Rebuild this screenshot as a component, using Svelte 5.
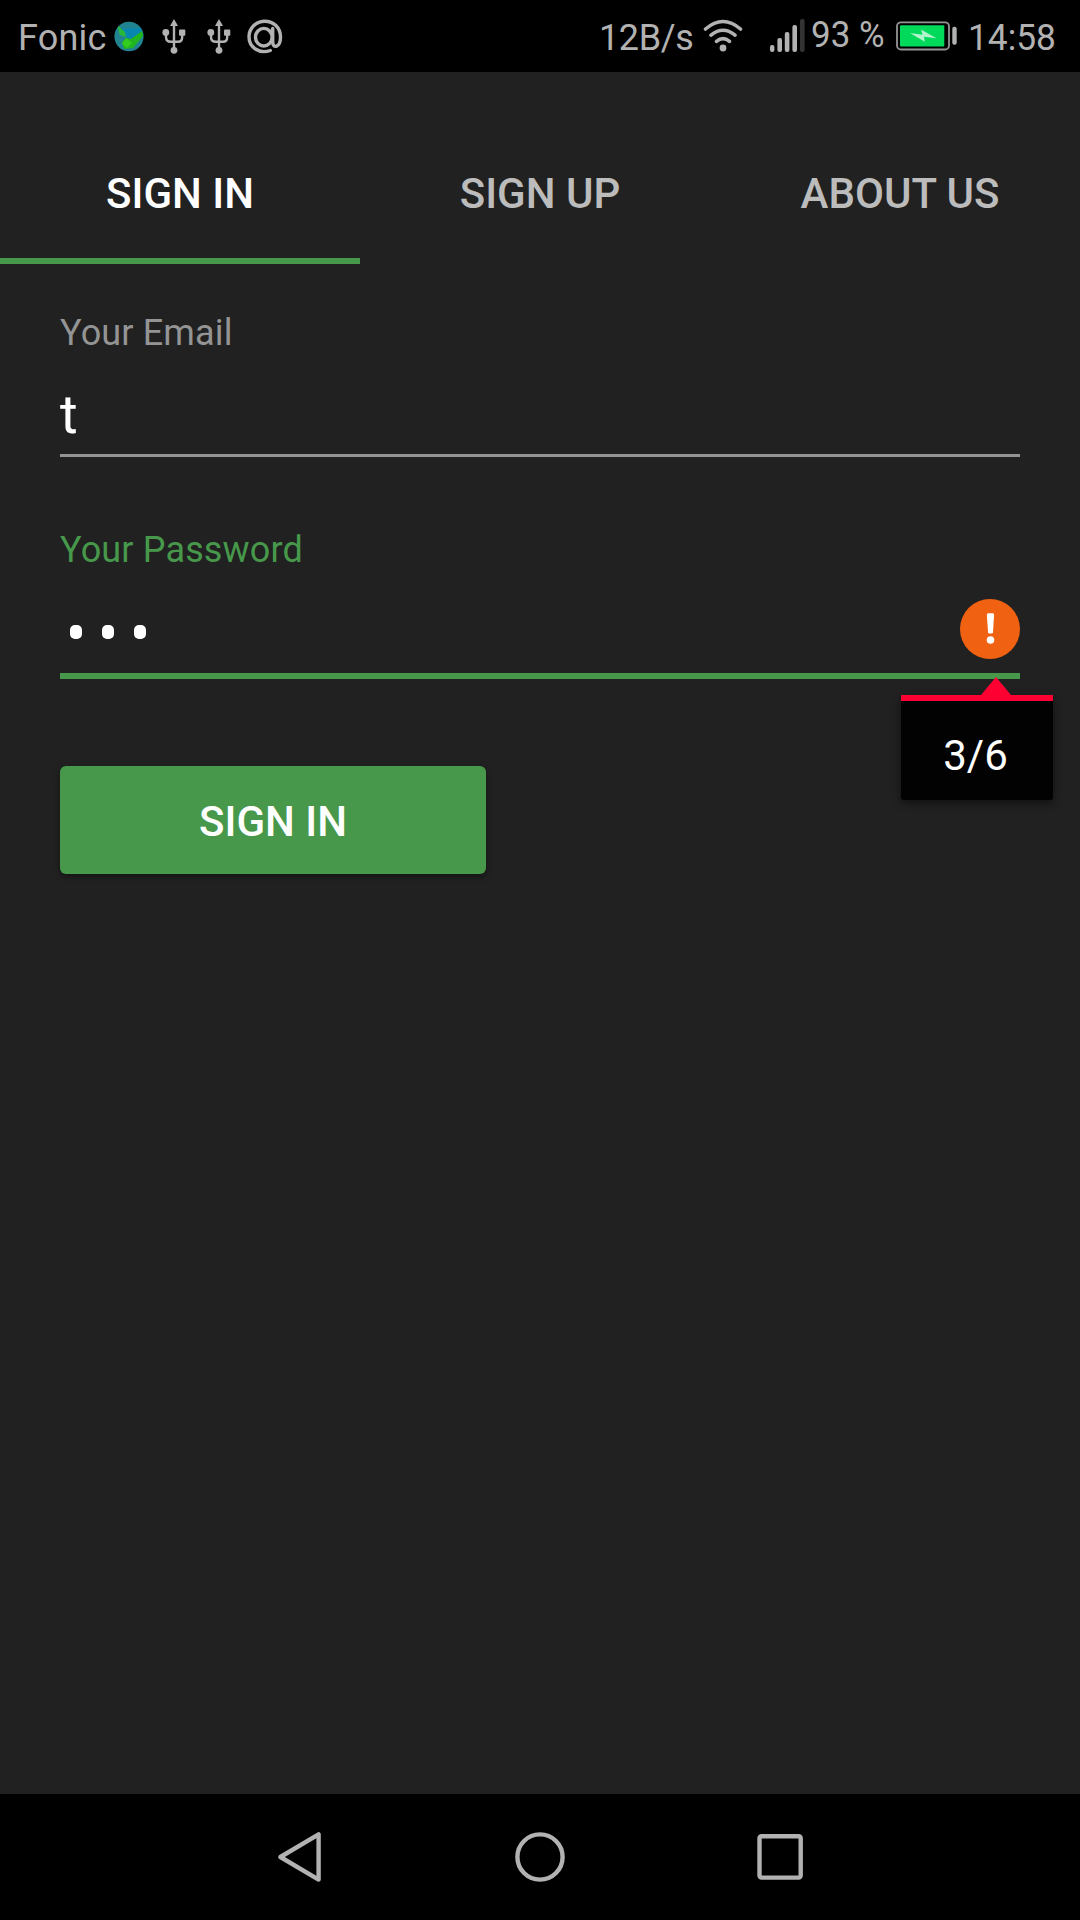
<script>
  const tabs = ['SIGN IN', 'SIGN UP', 'ABOUT US'];
  let active = $state(0);
  const dots = [0, 1, 2];
</script>

{#snippet usb()}
  <svg class="usb" width="24" height="36" viewBox="0 0 24 36">
    <path d="M12 0 16 7H8Z" />
    <circle cx="12" cy="31.3" r="3.4" />
    <circle cx="3.8" cy="13.5" r="3.4" />
    <rect x="17" y="10.5" width="6.3" height="6.3" rx="1" />
    <path class="line" d="M12 5V31M4 14V18Q4 22.8 9 22.8H16Q20.2 22.8 20.2 18V15" />
  </svg>
{/snippet}

<div class="screen">
  <header class="status">
    <span class="carrier">Fonic</span>
    <svg class="globe" width="30" height="31" viewBox="0 0 30 31">
      <defs><clipPath id="globe"><ellipse cx="15" cy="15.5" rx="14.6" ry="14.8" /></clipPath></defs>
      <g clip-path="url(#globe)">
        <rect width="30" height="31" fill="#21838f" />
        <path d="M4 8 28 7 28 12 15 18Z" fill="#0787b0" />
        <path d="M3 4 11 11 12 16 6 14Z" fill="#27b83a" />
        <path d="M28 10 29 15 19 27 10 28 8 21 12 17 17 18Z" fill="#21b51f" />
        <path d="M12 17 18 22 13 27 8 23Z" fill="#35cc20" />
      </g>
    </svg>
    {@render usb()}
    {@render usb()}
    <svg class="at" width="36" height="36" viewBox="0 0 36 36">
      <ellipse cx="16.8" cy="18.2" rx="8.3" ry="8.8" />
      <path d="M25.7 9.5V23C25.7 30.2 33.5 28.5 33.5 18C33.5 8.5 26.5 2.2 17.8 2.2C9 2.2 2 9.2 2 17.8C2 28.3 12 35.3 23.3 31.5" />
    </svg>
    <span class="speed">12B/s</span>
    <svg class="wifi" width="40" height="34" viewBox="0 0 40 34">
      <path d="M2.5 10Q20-5 37.5 10M8 16.2Q20 6.3 32 16.2M13.5 22.3Q20 17 26.5 22.3" />
      <circle cx="20" cy="29" r="3.4" />
    </svg>
    <svg class="signal" width="35" height="34" viewBox="0 0 35 34">
      <rect x="0" y="26" width="4.4" height="7" rx="2" />
      <rect x="7.4" y="19" width="4.6" height="14" rx="2" />
      <rect x="14.8" y="13" width="4.6" height="20" rx="2" />
      <rect x="22.4" y="6" width="4.6" height="27" rx="2" />
      <rect class="off" x="30" y="0" width="4.6" height="33" rx="2" />
    </svg>
    <span class="percent">93 %</span>
    <svg class="battery" width="61" height="30" viewBox="0 0 61 30">
      <rect x="1" y="1.3" width="52" height="27.2" rx="4" fill="none" stroke="#949494" stroke-width="1.8" />
      <rect x="4" y="4.3" width="44.3" height="21.2" rx="1" fill="#00d95a" />
      <path d="M14 12 26.5 13.7 25 8.5 40.5 17.3 28 15.8 28.8 20.8Z" fill="#b0f3cd" />
      <rect x="56.3" y="5.7" width="4.4" height="18" rx="2" fill="#b2b2b2" />
    </svg>
    <span class="clock">14:58</span>
  </header>

  <nav class="tabs">
    {#each tabs as tab, i}
      <button class="tab" class:active={active === i} onclick={() => (active = i)}>{tab}</button>
    {/each}
  </nav>

  <main class="form">
    <div class="field">
      <div class="label">Your Email</div>
      <div class="value">t</div>
    </div>
    <div class="field focused">
      <div class="label">Your Password</div>
      <div class="value">
        <div class="dots">
          {#each dots as dot (dot)}<i></i>{/each}
        </div>
        <svg class="alert" width="60" height="60" viewBox="0 0 60 60">
          <circle cx="30" cy="30" r="30" fill="#f16112" />
          <path d="M28.2 14.3H32.8Q34.2 14.3 34.1 16L33 33.2Q32.9 34.5 31.5 34.5H29.5Q28.1 34.5 28 33.2L26.9 16Q26.8 14.3 28.2 14.3Z" fill="#fff" />
          <circle cx="30.5" cy="41" r="3.8" fill="#fff" />
        </svg>
      </div>
      <div class="popup">
        <svg class="arrow" width="30" height="18" viewBox="0 0 30 18"><path d="M15 0 30 18H0Z" /></svg>
        <div class="message">3/6</div>
      </div>
    </div>
    <button class="submit">SIGN IN</button>
  </main>

  <footer class="navbar">
    <svg width="240" height="126" viewBox="0 0 240 126"><path d="M100.4 63 138.6 40.4V85.6Z" /></svg>
    <svg width="240" height="126" viewBox="0 0 240 126"><circle cx="120" cy="63" r="22.6" /></svg>
    <svg width="240" height="126" viewBox="0 0 240 126"><rect x="99.5" y="42.2" width="41.2" height="41.4" rx="2" /></svg>
  </footer>
</div>

<style>
  :global(body) {
    margin: 0;
    background: #212121;
  }
  .screen {
    width: 1080px;
    height: 1920px;
    display: flex;
    flex-direction: column;
    background: #212121;
    color: #fff;
    font-family: Roboto, sans-serif;
    overflow: hidden;
  }
  svg {
    display: block;
    flex: none;
  }
  button {
    border: 0;
    padding: 0;
    font: 500 42px/48px Roboto, sans-serif;
  }

  .status {
    height: 72px;
    flex: none;
    display: flex;
    align-items: flex-start;
    background: #000;
    color: #b2b2b2;
    fill: #b2b2b2;
    font-size: 36px;
    line-height: 72px;
    white-space: nowrap;
  }
  .status span {
    flex: none;
    padding-top: 2px;
  }
  .carrier {
    width: 96px;
    margin-left: 18px;
    letter-spacing: 0.2px;
  }
  .globe {
    margin-top: 21px;
  }
  .usb {
    margin: 19px 3px 0 18px;
  }
  .line {
    fill: none;
    stroke: #b2b2b2;
    stroke-width: 2.4;
  }
  .at {
    margin: 19px 0 0 13px;
    fill: none;
    stroke: #b2b2b2;
    stroke-width: 3.4;
    stroke-linecap: round;
  }
  .speed {
    width: 104px;
    margin-left: 316px;
    letter-spacing: -0.4px;
  }
  .wifi {
    margin: 19px 0 0;
  }
  .wifi path {
    fill: none;
    stroke: #b2b2b2;
    stroke-width: 3.6;
    stroke-linecap: round;
  }
  .signal {
    margin: 19px 0 0 27px;
  }
  .off {
    fill: #333;
  }
  .status .percent {
    width: 84px;
    margin-left: 6px;
    padding-top: 0;
    line-height: 71px;
    transform: scaleX(0.97);
    transform-origin: 0 50%;
  }
  .battery {
    margin: 21px 0 0 1px;
  }
  .clock {
    margin-left: 11px;
    transform: scaleX(0.98);
    transform-origin: 0 50%;
  }

  .tabs {
    display: grid;
    grid-template-columns: repeat(3, 1fr);
    margin-top: 48px;
    height: 144px;
    flex: none;
  }
  .tab {
    box-sizing: border-box;
    background: none;
    color: #bcbcbc;
    padding-top: 9px;
    border-bottom: 6px solid transparent;
  }
  .tab.active {
    color: #fff;
    border-color: #47984b;
  }

  .form {
    flex: 1;
    display: flex;
    flex-direction: column;
    align-items: flex-start;
    padding: 45px 60px 0;
  }
  .field {
    position: relative;
    width: 960px;
    color: #949494;
    margin-bottom: 69px;
  }
  .focused {
    color: #47984b;
    margin-bottom: 87px;
  }
  .label {
    font-size: 36px;
    line-height: 48px;
    letter-spacing: 0.15px;
  }
  .value {
    height: 97px;
    border-bottom: 3px solid #949494;
    color: #fff;
    font-size: 54px;
    line-height: 115px;
    display: flex;
    justify-content: space-between;
  }
  .focused .value {
    height: 99px;
    border-bottom: 6px solid #47984b;
  }
  .dots {
    display: flex;
    gap: 20px;
    padding: 51px 0 0 10px;
  }
  .dots i {
    width: 12px;
    height: 14px;
    border-radius: 5px;
    background: #fff;
  }
  .alert {
    margin-top: 25px;
  }
  .popup {
    position: absolute;
    right: -33px;
    top: 151px;
    width: 152px;
  }
  .arrow {
    margin-left: 80px;
    fill: #ff0033;
  }
  .message {
    box-sizing: border-box;
    height: 105px;
    border-top: 6px solid #ff0033;
    border-radius: 0 0 3px 3px;
    background: #020202;
    box-shadow: 0 3px 8px rgba(0, 0, 0, 0.5);
    color: #fff;
    font-size: 42px;
    line-height: 110px;
    padding-right: 3px;
    text-align: center;
  }
  .submit {
    width: 426px;
    height: 108px;
    background: #47984b;
    border-radius: 6px;
    box-shadow: 0 3px 6px rgba(0, 0, 0, 0.4);
    color: #fff;
    padding-top: 3px;
  }

  .navbar {
    height: 126px;
    flex: none;
    display: flex;
    justify-content: center;
    background: #000;
    fill: none;
    stroke: #b2b2b2;
    stroke-width: 4.4;
    stroke-linejoin: round;
  }
</style>
